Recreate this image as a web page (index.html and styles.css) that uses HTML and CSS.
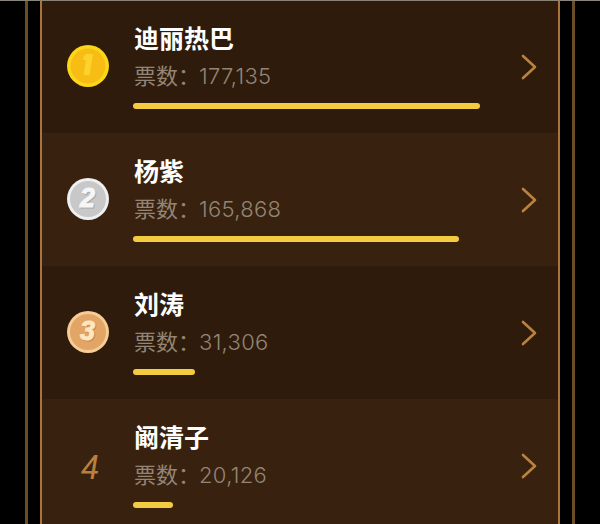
FILE: index.html
```html
<!DOCTYPE html>
<html lang="zh-CN">
<head>
  <meta charset="UTF-8" />
  <meta name="viewport" content="width=device-width, initial-scale=1.0"/>
  <title>排行榜</title>
  <link rel="stylesheet" href="styles.css">
</head>
<body>
  <div class="top-line"></div>
  <div class="outer">
    <div class="list">

      <div class="row row-dark">
        <div class="rank">
          <svg class="medal" viewBox="0 0 42 42">
            <circle cx="21" cy="21" r="21" fill="#fcd619"/>
            <circle cx="21" cy="21" r="17.5" fill="#f7bd14"/>
            <path d="M19 9h7l-3.5 21h-6l2.5-15h-3l1-4z" fill="#fdd22c"/>
          </svg>
        </div>
        <div class="info">
          <div class="name">迪丽热巴</div>
          <div class="votes">票数：<span class="num">177,135</span></div>
          <div class="bar bar-1"></div>
        </div>
        <svg class="arrow" viewBox="0 0 16 26"><path d="M2 2l12 11L2 24"/></svg>
      </div>

      <div class="row row-light">
        <div class="rank">
          <svg class="medal" viewBox="0 0 42 42">
            <circle cx="21" cy="21" r="21" fill="#efefef"/>
            <circle cx="21" cy="21" r="18" fill="#c8c8c8"/>
            <text class="medal-num" x="21.5" y="30" fill="#a9a9a9" stroke="#a9a9a9">2</text>
            <text class="medal-num" x="20.5" y="29" fill="#f6f6f6" stroke="#f6f6f6">2</text>
          </svg>
        </div>
        <div class="info">
          <div class="name">杨紫</div>
          <div class="votes">票数：<span class="num">165,868</span></div>
          <div class="bar bar-2"></div>
        </div>
        <svg class="arrow" viewBox="0 0 16 26"><path d="M2 2l12 11L2 24"/></svg>
      </div>

      <div class="row row-dark">
        <div class="rank">
          <svg class="medal" viewBox="0 0 42 42">
            <circle cx="21" cy="21" r="21" fill="#f6cd96"/>
            <circle cx="21" cy="21" r="18" fill="#e3a566"/>
            <text class="medal-num" x="21.5" y="30" fill="#c98a4c" stroke="#c98a4c">3</text>
            <text class="medal-num" x="20.5" y="29" fill="#fde6c0" stroke="#fde6c0">3</text>
          </svg>
        </div>
        <div class="info">
          <div class="name">刘涛</div>
          <div class="votes">票数：<span class="num">31,306</span></div>
          <div class="bar bar-3"></div>
        </div>
        <svg class="arrow" viewBox="0 0 16 26"><path d="M2 2l12 11L2 24"/></svg>
      </div>

      <div class="row row-light">
        <div class="rank"><span class="rank-num">4</span></div>
        <div class="info">
          <div class="name">阚清子</div>
          <div class="votes">票数：<span class="num">20,126</span></div>
          <div class="bar bar-4"></div>
        </div>
        <svg class="arrow" viewBox="0 0 16 26"><path d="M2 2l12 11L2 24"/></svg>
      </div>

    </div>
  </div>
</body>
</html>
```

FILE: styles.css
```css
html, body {
  margin: 0;
  height: 100%;
  overflow: hidden;
  background-color: #000;
}
body {
  font-family: "Noto Sans CJK SC", "Noto Sans", sans-serif;
  padding: 0 25px;
  box-sizing: border-box;
}
.top-line {
  position: absolute;
  top: 0;
  left: 0;
  right: 0;
  height: 1px;
  background-color: #8a8378;
}
.outer {
  height: 524px;
  padding: 0 12px;
  background-color: #000;
  border-left: 3px solid #6d4d26;
  border-right: 3px solid #6d4d26;
  box-sizing: border-box;
}
.list {
  height: 524px;
  border-left: 2px solid #a9733a;
  border-right: 2px solid #a9733a;
  box-sizing: border-box;
}
.row {
  display: flex;
  align-items: flex-start;
  box-sizing: border-box;
  height: 133px;
}
.row-dark {
  background-color: #2e1b0b;
}
.row-light {
  background-color: #39210f;
}
.rank {
  width: 92px;
  height: 132px;
  display: flex;
  align-items: center;
  justify-content: center;
  flex-shrink: 0;
}
.medal {
  width: 42px;
  height: 42px;
}
.medal-num {
  font-family: "Liberation Sans", sans-serif;
  font-size: 27px;
  font-weight: bold;
  font-style: italic;
  text-anchor: middle;
  stroke-width: 1;
}
.rank-num {
  font-family: "Roboto", sans-serif;
  font-size: 33px;
  font-style: italic;
  color: #b8803a;
  margin: 4px 0 0 4px;
}
.info {
  flex: 1;
  padding-top: 20px;
}
.name {
  font-size: 25px;
  line-height: 34px;
  font-weight: bold;
  color: #fff;
}
.votes {
  margin-top: 5px;
  font-size: 22px;
  line-height: 30px;
  color: #928575;
}
.num {
  font-family: "Inter", sans-serif;
  font-size: 22px;
  font-weight: 300;
  letter-spacing: 0.3px;
  margin-left: -1px;
}
.bar {
  margin-top: 12px;
  margin-left: -1px;
  height: 6px;
  border-radius: 3px;
  background-color: #f3cb40;
}
.bar-1 { width: 347px; }
.bar-2 { width: 326px; }
.bar-3 { width: 62px; }
.bar-4 { width: 40px; }
.arrow {
  width: 16px;
  height: 26px;
  margin: 54px 21px 0 0;
  flex-shrink: 0;
  fill: none;
  stroke: #b9833f;
  stroke-width: 2.6;
  stroke-linecap: round;
  stroke-linejoin: round;
}
```
